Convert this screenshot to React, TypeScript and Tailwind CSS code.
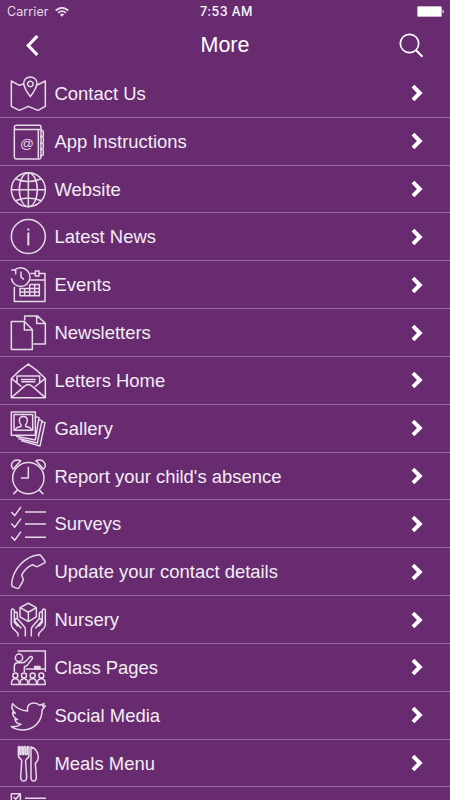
import type { ReactNode } from "react";

type Item = { label: string; top: number; icon: ReactNode };

const person = (x: number) => (
  <g key={x}>
    <circle cx={x} cy={96} r={7.5} />
    <path d={`M${x - 11.5} 123v-7q1-8 8-10h7q7 2 8 10v7z`} />
  </g>
);

const items: Item[] = [
  {
    label: "Contact Us",
    top: 20,
    icon: (
      <path d="M71 47L58 51L34 38V114L58 126L85 114L114 126L136 114V38L112 50M91 85Q71 58 71 44a20 18 0 0 1 40 0Q111 58 91 85zM91 38.500a8.500 8.500 0 1 0 .1 0z" />
    ),
  },
  {
    label: "App Instructions",
    top: 163.3,
    icon: (
      <>
        <path d="M43 176q0-6 7-6h68q5 0 5 6v90q0 5-5 5H49q-6 0-6-6zM43 176q0 7 7 7h73" />
        <path d="M123 186h4q3 0 3 4v10q0 4-3 4h-7M127 204q3 1 3 5v9q0 4-3 5h-7M127 223q3 1 3 5v9q0 4-3 5h-7M127 242q3 1 3 5v10q0 4-4 4h-6M115 183v86" />
        <text x="80.500" y="239" textAnchor="middle" fontSize="41" fill="currentColor" stroke="none">@</text>
      </>
    ),
  },
  {
    label: "Website",
    top: 18.8,
    icon: (
      <>
        <circle cx="85" cy="75" r="51" />
        <ellipse cx="85" cy="75" rx="27" ry="51" />
        <path d="M85 24v102M34 75h102M46 42q39 17 78 0M46 108q39-17 78 0" />
      </>
    ),
  },
  {
    label: "Latest News",
    top: 162.3,
    icon: (
      <>
        <circle cx="85" cy="218" r="51" />
        <path strokeWidth="6" d="M85 206v39M85 194v6" />
      </>
    ),
  },
  {
    label: "Events",
    top: 17.8,
    icon: (
      <>
        <circle cx="62" cy="51" r="28" strokeDasharray="150 26" strokeDashoffset="-110" />
        <path d="M34 30h13v13M63 34v17l9 7M43 80v44h92V40h-16M105 40H91M91 60h45M106 33h11v15h-11z" />
        <path d="M74 85H60v22h58V73H90M60 96h58M74 84v23M89 73v34M104 73v34M76 85h42" />
      </>
    ),
  },
  {
    label: "Newsletters",
    top: 161.25,
    icon: (
      <path d="M74 181V167h38l24 22v62H100M110 168v22h25M34 184h39l24 24v60H34zM73 185v24h24" />
    ),
  },
  {
    label: "Letters Home",
    top: 16.7,
    icon: (
      <path d="M34 66Q56 42 85 23Q114 42 136 66V124H34zM34 66L65 91M136 66L105 91M35 123L73 90Q85 78 97 90L135 123M51 79V59H119V79M63 69h44M64 76h42" />
    ),
  },
  {
    label: "Gallery",
    top: 160.2,
    icon: (
      <>
        <path d="M34 166h72v70H34zM42 174h56v47H42z" />
        <path d="M46 220q2-8 17-10v-6q-5-4-5-12 0-12 12-12t12 12q0 8-5 12v6q15 2 17 10M107 180l10 3-11 67-58-11M116 189l10 3-14 67-57-13M125 195l10 3-15 70-57-16" />
      </>
    ),
  },
  {
    label: "Report your child's absence",
    top: 15.7,
    icon: (
      <>
        <circle cx="85" cy="76" r="47" />
        <path d="M85 42v34H63M52 112l-12 12M118 112l12 12M39 49Q30 38 38 28T62 24L40 49zM131 49Q140 38 132 28T108 24L130 49z" />
      </>
    ),
  },
  {
    label: "Surveys",
    top: 159.2,
    icon: (
      <path d="M75 180h63M75 216h63M75 256h63M34 180l10 11 19-26M34 215l10 11 19-26M34 254l10 11 19-26" />
    ),
  },
  {
    label: "Update your contact details",
    top: 14.7,
    icon: (
      <path d="M35 107C38 63 76 24 117 20Q122 20 125 26L134 38Q138 43 131 46L113 55Q109 57 105 53L97 50Q75 60 65 81L69 91Q71 96 68 100L58 118Q55 123 49 120L39 116Q34 113 35 107z" />
    ),
  },
  {
    label: "Nursery",
    top: 158.2,
    icon: (
      <>
        <path d="M60 178l25-13 24 13v28l-24 14-25-14zM60 178l25 14 24-14M85 192v28" />
        <path d="M54 265v-9L38 239q-4-5-4-11v-42q0-4 4-4t5 4v36l11 13M76 265v-20q0-7-4-11L54 213q-4-4-8 0-3 3 0 7l18 21M43 195q1-4 5-4t4 5v15M116 265v-9l16-17q4-5 4-11v-42q0-4-4-4t-5 4v36l-11 13M94 265v-20q0-7 4-11l18-21q4-4 8 0 3 3 0 7l-18 21M127 195q-1-4-5-4t-4 5v15" />
      </>
    ),
  },
  {
    label: "Class Pages",
    top: 16.7,
    icon: (
      <>
        <circle cx="57" cy="43" r="11" />
        <path d="M53 23h83v54M43 86V69q0-11 11-11h14q7-1 14-9l8-9q5-2 7 2 1 2-1 5L82 65q-5 4-9 5v16M77 77h59v8" />
        <path fill="currentColor" d="M104 69h16v8h-16z" />
        {[46, 72, 98, 124].map(person)}
      </>
    ),
  },
  {
    label: "Social Media",
    top: 160.2,
    icon: (
      <path d="M38 180C48 193 62 201 83 202C80 189 87 178 101 178C108 178 114 180 119 185L132 180L128 188L136 187L126 199C127 228 106 259 69 259C55 259 43 255 34 249C45 250 55 248 63 242C53 241 47 236 45 228L53 228C43 224 38 217 38 207L46 209C36 201 34 190 38 180z" />
    ),
  },
  {
    label: "Meals Menu",
    top: 42.7,
    icon: (
      <path d="M55 49v24q0 9 8 13 3 2 2 8l-3 43q0 14 9 14t9-14l-3-43q-1-6 2-8 8-4 8-13V49q-4-4-5 0v22h-5V49q-4-4-5 0v22h-4V49q-4-4-5 0v22h-4V49q-3-4-4 0zM93 49q20 5 22 31 0 10-9 18l3 39q0 14-8 14t-8-14z" />
    ),
  },
  {
    label: "",
    top: 186,
    icon: (
      <path d="M34 191h27v27H34zM41 201l6 7 12-14M75 205h63M75 240h63M34 228h27v27H34z" />
    ),
  },
];

function StatusBar() {
  return (
    <div className="grid h-[23px] shrink-0 grid-cols-3 items-center pr-[6px] pl-[7px] font-[Inter,sans-serif] text-[12.5px] leading-none">
      <div className="flex items-center gap-[6px] text-[#e5dae7]">
        <span className="leading-[16px] tracking-[0.1px]">Carrier</span>
        <svg className="h-[10px] w-[14px]" viewBox="0 0 14 10" fill="none" stroke="currentColor" strokeWidth="1.7">
          <path d="M.7 3.500Q7-2 13.300 3.500M3.100 5.900Q7 2.500 10.900 5.900" />
          <path d="M4.800 7.400Q7 5.600 9.200 7.400L7 9.800z" fill="currentColor" stroke="none" />
        </svg>
      </div>
      <span className="pl-[2px] text-center leading-[16px] font-medium tracking-[0.45px]">7:53 AM</span>
      <svg className="h-[11px] w-[27px] justify-self-end" viewBox="0 0 27 11" fill="currentColor">
        <rect x="0" y="0" width="25" height="11" rx="1.500" opacity=".65" />
        <rect x="1" y="1" width="23" height="9" rx=".5" />
        <path d="M25.500 3.700q1.500.5 1.500 1.800t-1.500 1.800z" opacity=".85" />
      </svg>
    </div>
  );
}

function Header() {
  return (
    <header className="flex h-[47px] shrink-0 items-center justify-between pr-[26px] pb-[1.500px] pl-[26px]">
      <svg className="h-[22px] w-[26px]" viewBox="0 0 26 22" fill="none" stroke="currentColor" strokeWidth="3.200">
        <path d="M11.300 1L2.300 10.500L11.300 20" />
      </svg>
      <h1 className="text-[21.500px] leading-none">More</h1>
      <svg className="h-[26px] w-[26px]" viewBox="0 0 26 26" fill="none" stroke="currentColor" strokeWidth="1.700">
        <circle cx="11.500" cy="10.500" r="9.200" />
        <path d="M18 17.200l6.500 6.600" strokeWidth="2" />
      </svg>
    </header>
  );
}

function Row({ label, top, icon }: Item) {
  return (
    <li className="flex h-[47.830px] shrink-0 items-center border-b border-[#95699a] pl-[10px]">
      <svg
        className="h-[37px] w-[37px] shrink-0 text-[#e6d9e8]"
        viewBox={`30 ${top} 111 111`}
        fill="none"
        stroke="currentColor"
        strokeWidth="4.500"
        strokeLinejoin="round"
      >
        {icon}
      </svg>
      <span className="ml-[7.500px] flex-1 pt-[1px] text-[18.450px] leading-[22px] text-[#f3edf4]">{label}</span>
      <svg className="mr-[27px] h-[18px] w-[12px]" viewBox="0 0 12 18" fill="none" stroke="currentColor" strokeWidth="4">
        <path d="M2 2.200L8.800 9L2 15.800" />
      </svg>
    </li>
  );
}

export default function App() {
  return (
    <main className="flex h-[800px] w-[450px] flex-col overflow-hidden bg-[#682b70] font-['Liberation_Sans',Arial,sans-serif] text-white">
      <StatusBar />
      <Header />
      <ul className="flex flex-col">
        {items.map((item, i) => (
          <Row key={i} {...item} />
        ))}
      </ul>
    </main>
  );
}
